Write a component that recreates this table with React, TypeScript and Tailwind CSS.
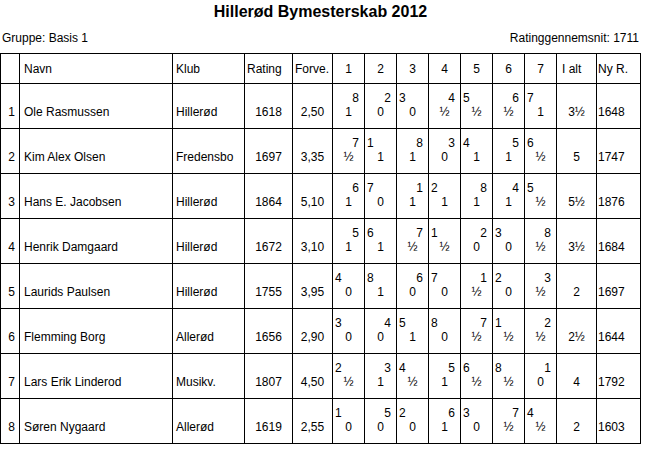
import React from 'react';

type Side = 'l' | 'r';

interface Round {
  opp: number;
  side: Side;
  res: string;
}

interface Player {
  nr: number;
  name: string;
  club: string;
  rating: string;
  forv: string;
  rounds: Round[];
  total: string;
  ny: string;
}

// '8r1' -> opponent 8, right aligned (white), result 1
const rd = (code: string): Round => ({
  opp: Number(code[0]),
  side: code[1] as Side,
  res: code.slice(2),
});

const players: Player[] = [
  { nr: 1, name: 'Ole Rasmussen', club: 'Hillerød', rating: '1618', forv: '2,50', rounds: ['8r1', '2r0', '3l0', '4r½', '5l½', '6r½', '7l1'].map(rd), total: '3½', ny: '1648' },
  { nr: 2, name: 'Kim Alex Olsen', club: 'Fredensbo', rating: '1697', forv: '3,35', rounds: ['7r½', '1l1', '8r1', '3r0', '4l1', '5r1', '6l½'].map(rd), total: '5', ny: '1747' },
  { nr: 3, name: 'Hans E. Jacobsen', club: 'Hillerød', rating: '1864', forv: '5,10', rounds: ['6r1', '7l0', '1r1', '2l1', '8r1', '4r1', '5l½'].map(rd), total: '5½', ny: '1876' },
  { nr: 4, name: 'Henrik Damgaard', club: 'Hillerød', rating: '1672', forv: '3,10', rounds: ['5r1', '6l1', '7r½', '1l½', '2r0', '3l0', '8r½'].map(rd), total: '3½', ny: '1684' },
  { nr: 5, name: 'Laurids Paulsen', club: 'Hillerød', rating: '1755', forv: '3,95', rounds: ['4l0', '8l1', '6r0', '7l0', '1r½', '2l0', '3r½'].map(rd), total: '2', ny: '1697' },
  { nr: 6, name: 'Flemming Borg', club: 'Allerød', rating: '1656', forv: '2,90', rounds: ['3l0', '4r0', '5l1', '8l0', '7r½', '1l½', '2r½'].map(rd), total: '2½', ny: '1644' },
  { nr: 7, name: 'Lars Erik Linderod', club: 'Musikv.', rating: '1807', forv: '4,50', rounds: ['2l½', '3r1', '4l½', '5r1', '6l½', '8l½', '1r0'].map(rd), total: '4', ny: '1792' },
  { nr: 8, name: 'Søren Nygaard', club: 'Allerød', rating: '1619', forv: '2,55', rounds: ['1l0', '5r0', '2l0', '6r1', '3l0', '7r½', '4l½'].map(rd), total: '2', ny: '1603' },
];

const head = 'h-[30px] border-r border-b border-black flex items-center';
const cell = 'h-[45px] border-r border-b border-black flex items-end pb-[9px]';

const App: React.FC = () => {
  return (
    <div className="w-[645px] h-[457px] bg-white text-black text-[12px] leading-[14px] font-['Liberation_Sans',Arial,sans-serif]">
      <div className="w-[641px] pt-[3px] text-center text-[16px] leading-[18px] font-bold">
        Hillerød Bymesterskab 2012
      </div>

      <div className="w-[641px] mt-[10px] flex justify-between pl-[2px] pr-[2px]">
        <span>Gruppe: Basis 1</span>
        <span>Ratinggennemsnit: 1711</span>
      </div>

      <div className="mt-[8px] w-[641px] grid grid-cols-[19px_153px_72px_48px_40px_repeat(7,32px)_40px_44px] border-l border-t border-black">
        <div className={head} />
        <div className={`${head} pl-[4px]`}>Navn</div>
        <div className={`${head} pl-[3px]`}>Klub</div>
        <div className={`${head} pl-[2px]`}>Rating</div>
        <div className={`${head} pl-[2px]`}>Forve.</div>
        {[1, 2, 3, 4, 5, 6, 7].map((n) => (
          <div key={n} className={`${head} justify-center`}>
            {n}
          </div>
        ))}
        <div className={`${head} pl-[5px]`}>I alt</div>
        <div className={`${head} pl-[1px]`}>Ny R.</div>

        {players.map((p) => (
          <React.Fragment key={p.nr}>
            <div className={`${cell} justify-end pr-[4px]`}>{p.nr}</div>
            <div className={`${cell} pl-[4px]`}>{p.name}</div>
            <div className={`${cell} pl-[3px]`}>{p.club}</div>
            <div className={`${cell} justify-center`}>{p.rating}</div>
            <div className={`${cell} justify-center`}>{p.forv}</div>
            {p.rounds.map((r, i) => (
              <div key={i} className={`${cell} flex-col items-stretch justify-end`}>
                <div className={r.side === 'r' ? 'text-right pr-[5px]' : 'text-left pl-[2px]'}>{r.opp}</div>
                <div className="text-center">{r.res}</div>
              </div>
            ))}
            <div className={`${cell} justify-center`}>{p.total}</div>
            <div className={`${cell} pl-[1px]`}>{p.ny}</div>
          </React.Fragment>
        ))}
      </div>
    </div>
  );
};

export default App;
